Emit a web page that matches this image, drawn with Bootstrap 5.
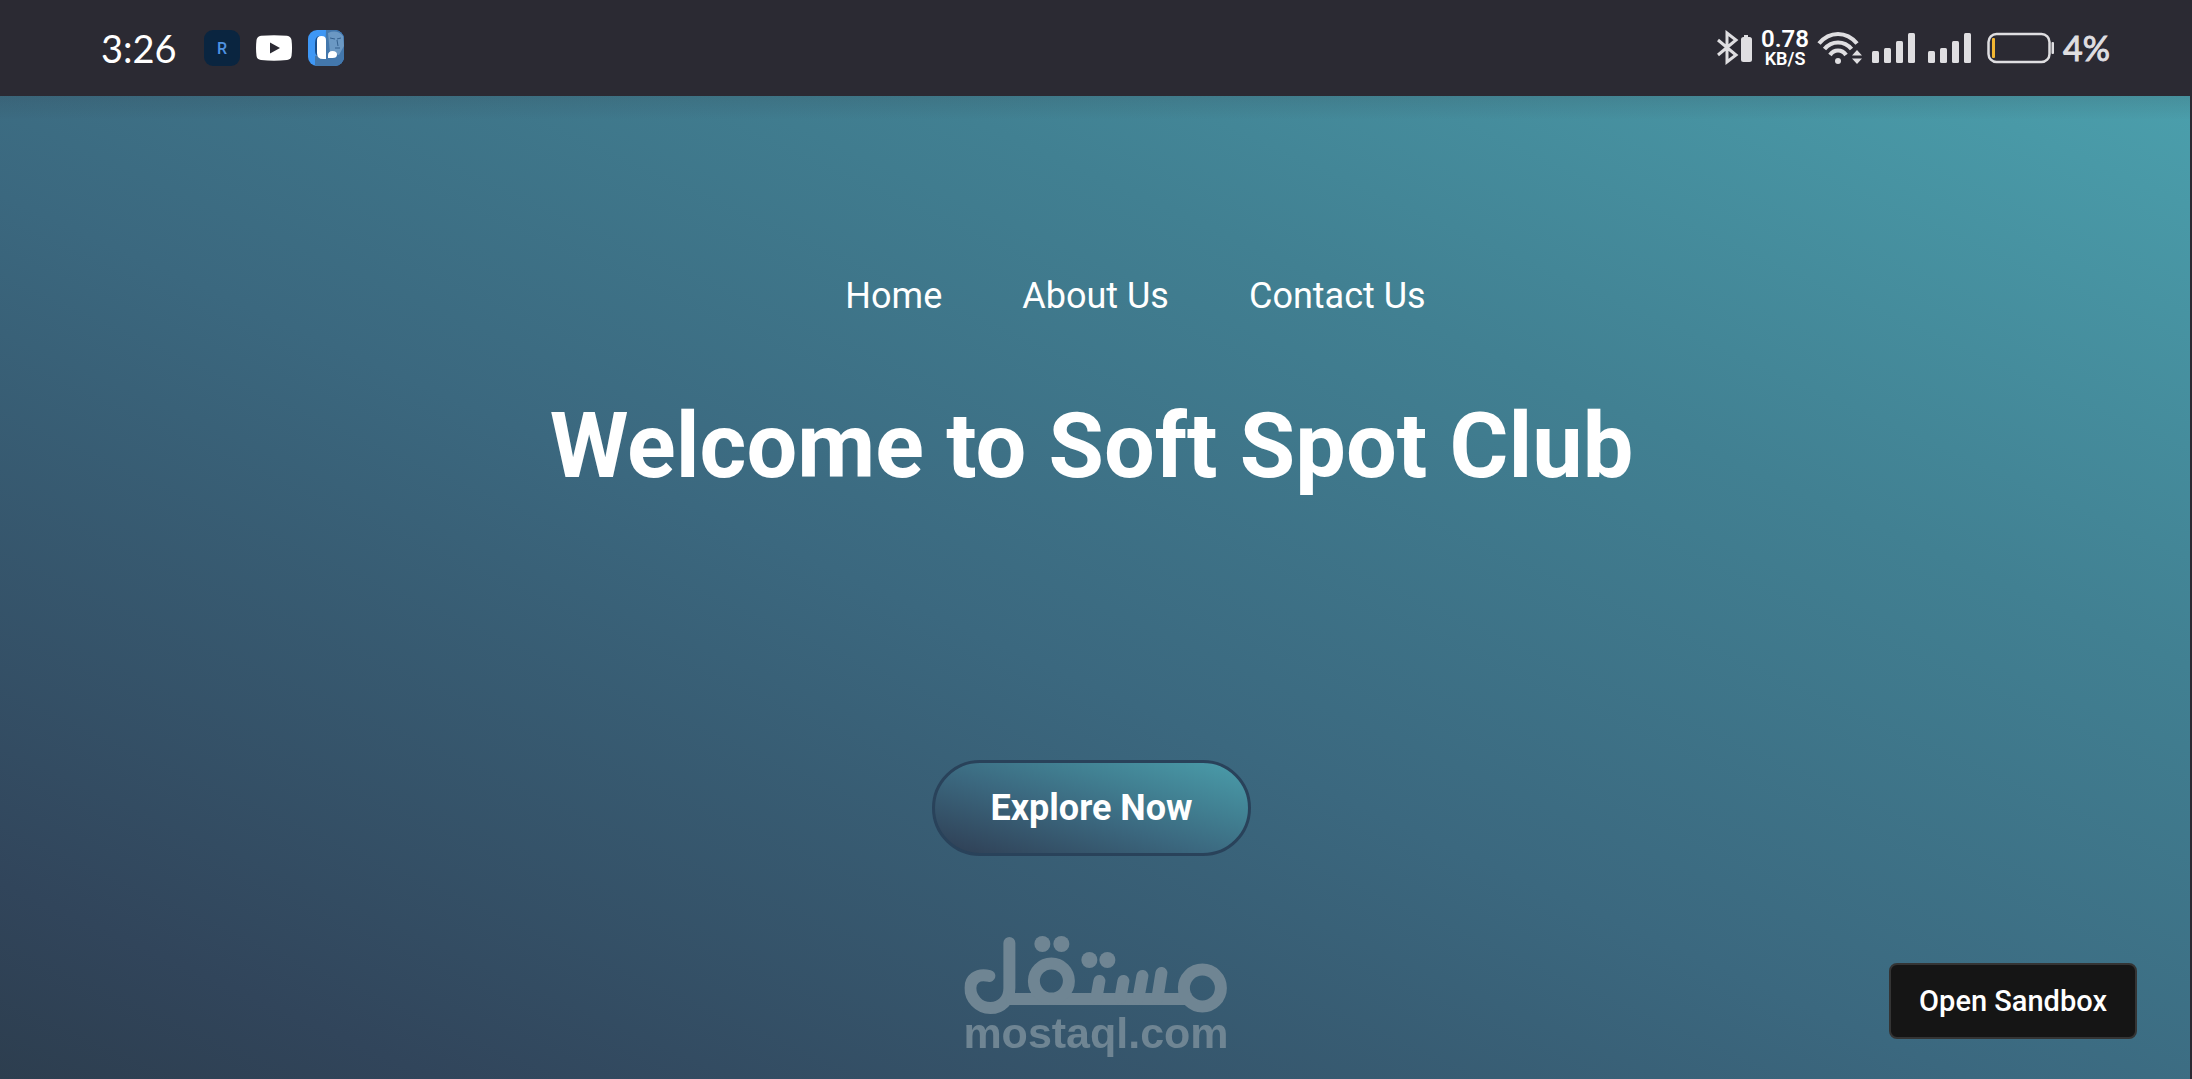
<!DOCTYPE html>
<html lang="en">
<head>
<meta charset="utf-8">
<meta name="viewport" content="width=device-width, initial-scale=1">
<title>Soft Spot Club</title>
<link href="https://cdn.jsdelivr.net/npm/bootstrap@5.3.0/dist/css/bootstrap.min.css" rel="stylesheet">
<style>
body { font-family: Roboto, "Noto Sans", sans-serif; background: #2b2a33; }
.status-bar { padding: 0 82px 0 101px; height: 96px; font-family: Lato, sans-serif; color: #fff; }
.status-bar svg { display: block; flex: none; }
.clock { font-size: 38px; line-height: 48px; margin-right: 27px; }
.app-icons { gap: 16px; }
.sys-icons { gap: 8px; color: #dfdee1; }
.net-rate { font: 600 24px/22px Roboto, sans-serif; color: #fff; text-align: center; }
.net-rate small { display: block; font-size: 18px; line-height: 18px; font-weight: 600; }
.battery-level { font-size: 34px; line-height: 48px; -webkit-text-stroke: 1px currentColor; }
.hero { margin-right: 2px; padding: 172px 7px 0 0; background: linear-gradient(#2b2a3322, #2b2a3300 24px), linear-gradient(to top right, #2d3e4f, #31455b 10%, #3b687f 45%, #418092 71%, #4b9fac); }
.hero-nav { gap: 80px; padding-left: 88px; font-size: 36px; line-height: 56px; }
.hero-nav a { color: #fff; text-decoration: none; }
.hero-title { margin: 69px 0 0; font-size: 90px; line-height: 108px; font-weight: 700; color: #fff; }
.explore { margin-top: 259px; padding: 18px 55px; font-size: 36px; line-height: 54px; font-weight: 700; border: 3px solid #29425a; border-radius: 48px; background: linear-gradient(to top right, #2d3e4f, #31455b 10%, #3b687f 45%, #418092 68%, #4b9fac) border-box; }
.explore, .explore:hover { color: #fff; border-color: #29425a; }
.sandbox { right: 55px; bottom: 40px; padding: 18px 28px; font-size: 29px; line-height: 36px; font-weight: 500; border-radius: 8px; }
.sandbox, .sandbox:hover { color: #fff; background: #151515; border: 2px solid #343434; }
.watermark { bottom: 27px; color: #6f8593; font: 700 43px/38px "Liberation Sans", sans-serif; pointer-events: none; }
.watermark svg { display: block; }
</style>
<script src="https://cdn.jsdelivr.net/npm/bootstrap@5.3.0/dist/js/bootstrap.bundle.min.js"></script>
</head>
<body class="d-flex flex-column min-vh-100">
<header class="status-bar d-flex justify-content-between align-items-center">
  <div class="d-flex align-items-center">
    <span class="clock">3:26</span>
    <div class="app-icons d-flex align-items-center">
      <svg width="36" height="36" viewBox="0 0 36 36" aria-hidden="true"><rect width="36" height="36" rx="9" fill="#0a2540"/><text x="18" y="24" text-anchor="middle" font-family="Roboto, sans-serif" font-size="16" font-weight="500" fill="#4f93e3">R</text></svg>
      <svg width="36" height="36" viewBox="0 0 36 36" aria-hidden="true"><path d="M5 5.800Q18 4.500 31 5.800Q35 6.500 35.500 10Q36.500 18 35.500 26Q35 29.500 31 30Q18 31.500 5 30Q1 29.500 .500 26Q-.500 18 .500 10Q1 6.500 5 5.800Z" fill="#fff"/><path d="M14 12.500 24 18l-10 5.500z" fill="#2b2a33"/></svg>
      <svg width="36" height="36" viewBox="0 0 36 36" aria-hidden="true"><defs><clipPath id="tile"><rect width="36" height="36" rx="9"/></clipPath></defs><g clip-path="url(#tile)"><rect width="36" height="36" fill="#3e97f5"/><path d="M18 0h18v36H7V26l10-3z" fill="#4377ac"/><path d="M20 3q9-4 15 3l1 10-5 9-9-2z" fill="#6b98c3"/><path d="M22 8l5 1M29 9l4-1M29 10l1 6M27 18h5" stroke="#345f8c" fill="none"/><path d="M7 13q0-6 4-7l-1 20q-3-1-3-5z" fill="#174e8d"/><path d="M9 10q0-4 4.500-4t4.500 4v19h-3q-6 0-6-6z" fill="#fff"/><path d="M20 28v-2.500q0-4.500 4.500-4.500t4.500 3.500-4.500 3.500z" fill="#fff"/></g></svg>
    </div>
  </div>
  <div class="sys-icons d-flex align-items-center">
    <svg width="36" height="36" viewBox="0 0 36 36" aria-hidden="true"><path d="M1 10 19 25l-9 7V3l9 7L1 25" fill="none" stroke="currentColor" stroke-width="3"/><path d="M27 5h4v2h-4z" fill="currentColor"/><rect x="24" y="7" width="11" height="25" rx="2.500" fill="currentColor"/></svg>
    <div class="net-rate">0.78<small>KB/S</small></div>
    <svg width="46" height="36" viewBox="0 0 46 36" aria-hidden="true"><g fill="none" stroke="currentColor" stroke-width="4.200"><path d="M2 13.500Q10 4 21 4t19 9.500"/><path d="M7.500 19Q13 12.500 21 12.500T34.500 19"/><path d="M13 25q3-4.500 8-4.500t8 4.500"/></g><circle cx="21" cy="31" r="3" fill="currentColor"/><path d="M35 25.500 40 20l5 5.500zM35 28.500 40 34l5-5.500z" fill="currentColor"/></svg>
    <svg width="44" height="36" viewBox="0 0 44 36" aria-hidden="true" fill="currentColor"><rect x="1" y="21" width="7" height="12" rx="1.500"/><rect x="13" y="18" width="7" height="15" rx="1.500"/><rect x="25" y="11" width="7" height="22" rx="1.500"/><rect x="37" y="3" width="7" height="30" rx="1.500"/></svg>
    <svg class="ms-1" width="44" height="36" viewBox="0 0 44 36" aria-hidden="true" fill="currentColor"><rect x="1" y="21" width="7" height="12" rx="1.500"/><rect x="13" y="18" width="7" height="15" rx="1.500"/><rect x="25" y="11" width="7" height="22" rx="1.500"/><rect x="37" y="3" width="7" height="30" rx="1.500"/></svg>
    <svg class="ms-2" width="68" height="36" viewBox="0 0 68 36" aria-hidden="true"><rect x="1.500" y="4" width="61" height="28" rx="8" fill="none" stroke="currentColor" stroke-width="2.500"/><rect x="5" y="8" width="3" height="20" rx="1" fill="#f2b632"/><rect x="64.500" y="12" width="2.500" height="12" rx="1" fill="currentColor"/></svg>
    <span class="battery-level">4%</span>
  </div>
</header>
<main class="hero flex-grow-1 d-flex flex-column align-items-center">
  <nav class="hero-nav d-flex" aria-label="Main"><a href="#">Home</a><a href="#">About Us</a><a href="#">Contact Us</a></nav>
  <h1 class="hero-title">Welcome to Soft Spot Club</h1>
  <button type="button" class="btn explore">Explore Now</button>
</main>
<button type="button" class="btn sandbox position-fixed">Open Sandbox</button>
<div class="watermark position-fixed start-50 translate-middle-x d-flex flex-column align-items-center">
  <svg width="264" height="78" viewBox="0 0 264 78" role="img" aria-label="مستقل" fill="none" stroke="currentColor" stroke-width="12" stroke-linecap="round">
    <path d="M25 40C12 37 6 44 6 52c0 10 8 20 20 20 11 0 19-8 19-20V7"/>
    <path d="M42 63h185" stroke-linecap="butt"/>
    <circle cx="87" cy="45" r="17.500"/><circle cx="238" cy="52" r="18.500"/>
    <path d="M135 45l-3 17M159 45l-3 17M178 40l-4 22M197 37l-4 25"/>
    <g fill="currentColor" stroke="none"><circle cx="78" cy="8" r="8"/><circle cx="97" cy="8" r="8"/><circle cx="125" cy="24" r="8"/><circle cx="143" cy="24" r="8"/></g>
  </svg>
  <span>mostaql.com</span>
</div>
</body>
</html>
